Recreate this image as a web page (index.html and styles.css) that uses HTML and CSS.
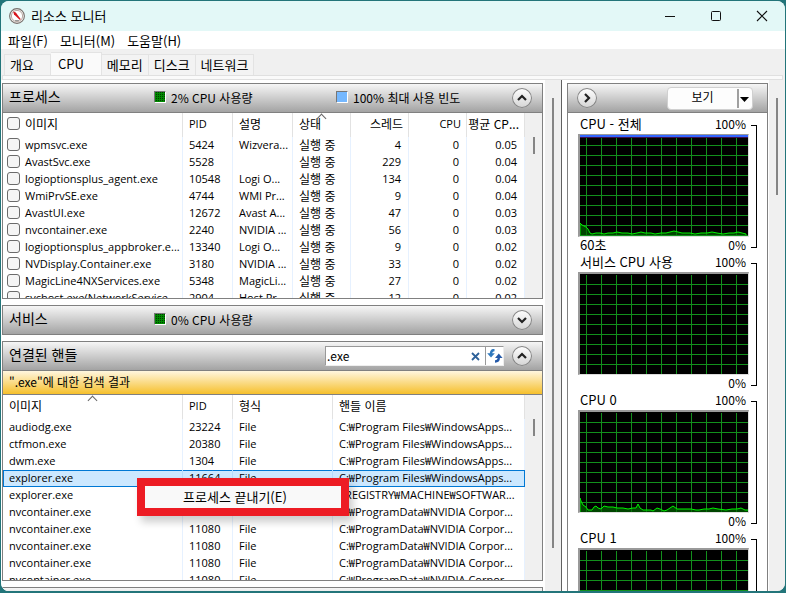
FILE: index.html
```html
<!DOCTYPE html>
<html lang="ko">
<head>
<meta charset="utf-8">
<title>리소스 모니터</title>
<link rel="stylesheet" href="styles.css">
</head>
<body>
<div class="window">
  <header class="titlebar">
    <svg class="app-icon" width="16" height="16" viewBox="0 0 16 16" aria-hidden="true">
      <circle cx="8" cy="8" r="7.4" fill="#f4f1ef" stroke="#77706c" stroke-width="1.1"/>
      <circle cx="8" cy="8" r="5.6" fill="#fff" stroke="#b9aaa4" stroke-width="1"/>
      <path d="M4.200 3.600 6.800 4.400 11.800 11.200 10.600 11.800 5 6.400Z" fill="#d8151c"/>
      <path d="M6 12.5h4" stroke="#999" stroke-width="1"/>
    </svg>
    <h1 class="title">리소스 모니터</h1>
    <div class="controls">
      <button type="button" aria-label="최소화"><svg width="12" height="12" viewBox="0 0 12 12"><path d="M1 6.5h10" stroke="#111"/></svg></button>
      <button type="button" aria-label="최대화"><svg width="12" height="12" viewBox="0 0 12 12"><rect x="1.5" y="1.5" width="9" height="9" rx="1" fill="none" stroke="#111"/></svg></button>
      <button type="button" aria-label="닫기"><svg width="12" height="12" viewBox="0 0 12 12"><path d="M1 1l10 10M11 1 1 11" stroke="#111" stroke-width="1.1"/></svg></button>
    </div>
  </header>
  <nav class="menubar">
    <button type="button">파일(F)</button>
    <button type="button">모니터(M)</button>
    <button type="button">도움말(H)</button>
  </nav>
  <div class="tabs" role="tablist">
    <button type="button" role="tab" class="tab tab-first">개요</button>
    <button type="button" role="tab" class="tab active" aria-selected="true">CPU</button>
    <button type="button" role="tab" class="tab">메모리</button>
    <button type="button" role="tab" class="tab">디스크</button>
    <button type="button" role="tab" class="tab">네트워크</button>
  </div>
  <div class="tab-edge"></div>

  <main class="content">
    <div class="left">
      <section class="panel">
        <div class="panel-head">
          <h2>프로세스</h2>
          <span class="stat stat-usage"><i class="swatch green"></i>2% CPU 사용량</span>
          <span class="stat"><i class="swatch blue"></i>100% 최대 사용 빈도</span>
          <button type="button" class="round" aria-label="접기"><svg width="20" height="20" viewBox="0 0 20 20"><path d="M6 12l4-4 4 4" fill="none" stroke="#222" stroke-width="2.2"/></svg></button>
        </div>
        <div class="view">
          <table class="grid">
            <colgroup><col><col class="w50"><col class="w60"><col class="w58"><col class="w58"><col class="w58"><col class="w58"></colgroup>
            <thead><tr><th><label><input type="checkbox">이미지</label></th><th class="latin">PID</th><th>설명</th><th class="sorted">상태</th><th class="num">스레드</th><th class="num latin">CPU</th><th class="num">평균 CP...</th></tr></thead>
            <tbody>
              <tr><td><label><input type="checkbox">wpmsvc.exe</label></td><td>5424</td><td>Wizvera...</td><td class="ko">실행 중</td><td class="num">4</td><td class="num">0</td><td class="num">0.05</td></tr>
              <tr><td><label><input type="checkbox">AvastSvc.exe</label></td><td>5528</td><td></td><td class="ko">실행 중</td><td class="num">229</td><td class="num">0</td><td class="num">0.04</td></tr>
              <tr><td><label><input type="checkbox">logioptionsplus_agent.exe</label></td><td>10548</td><td>Logi O...</td><td class="ko">실행 중</td><td class="num">134</td><td class="num">0</td><td class="num">0.04</td></tr>
              <tr><td><label><input type="checkbox">WmiPrvSE.exe</label></td><td>4744</td><td>WMI Pr...</td><td class="ko">실행 중</td><td class="num">9</td><td class="num">0</td><td class="num">0.04</td></tr>
              <tr><td><label><input type="checkbox">AvastUI.exe</label></td><td>12672</td><td>Avast A...</td><td class="ko">실행 중</td><td class="num">47</td><td class="num">0</td><td class="num">0.03</td></tr>
              <tr><td><label><input type="checkbox">nvcontainer.exe</label></td><td>2240</td><td>NVIDIA ...</td><td class="ko">실행 중</td><td class="num">56</td><td class="num">0</td><td class="num">0.03</td></tr>
              <tr><td><label><input type="checkbox">logioptionsplus_appbroker.e...</label></td><td>13340</td><td>Logi O...</td><td class="ko">실행 중</td><td class="num">9</td><td class="num">0</td><td class="num">0.02</td></tr>
              <tr><td><label><input type="checkbox">NVDisplay.Container.exe</label></td><td>3180</td><td>NVIDIA ...</td><td class="ko">실행 중</td><td class="num">33</td><td class="num">0</td><td class="num">0.02</td></tr>
              <tr><td><label><input type="checkbox">MagicLine4NXServices.exe</label></td><td>5348</td><td>MagicLi...</td><td class="ko">실행 중</td><td class="num">27</td><td class="num">0</td><td class="num">0.02</td></tr>
              <tr><td><label><input type="checkbox">svchost.exe(NetworkService...</label></td><td>2904</td><td>Host Pr...</td><td class="ko">실행 중</td><td class="num">12</td><td class="num">0</td><td class="num">0.02</td></tr>
            </tbody>
          </table>
          <div class="lane"><div class="thumb"></div></div>
        </div>
      </section>

      <section class="panel">
        <div class="panel-head">
          <h2>서비스</h2>
          <span class="stat stat-usage"><i class="swatch green"></i>0% CPU 사용량</span>
          <button type="button" class="round" aria-label="펼치기"><svg width="20" height="20" viewBox="0 0 20 20"><path d="M6 8l4 4 4-4" fill="none" stroke="#222" stroke-width="2.2"/></svg></button>
        </div>
      </section>

      <section class="panel">
        <div class="panel-head">
          <h2>연결된 핸들</h2>
          <div class="search">
            <input type="text" value=".exe" aria-label="핸들 검색">
            <button type="button" class="clear" aria-label="지우기"><svg width="9" height="9" viewBox="0 0 9 9"><path d="M1 1l7 7M8 1 1 8" stroke="#2d6199" stroke-width="1.8"/></svg></button>
            <button type="button" class="refresh" aria-label="새로 고침"><svg width="16" height="14" viewBox="0 0 16 14"><path d="M7.5 1C5 1 4 2 4 5" fill="none" stroke="#2f78bd" stroke-width="2.4"/><path d="M.2 4.200h7.600L4 8.500Z" fill="#2f78bd"/><path d="M8 12.500c2.600 0 3.800-1 3.800-4" fill="none" stroke="#2459a8" stroke-width="2.4"/><path d="M8 9h7.600L11.800 4.600Z" fill="#2459a8"/></svg></button>
          </div>
          <button type="button" class="round" aria-label="접기"><svg width="20" height="20" viewBox="0 0 20 20"><path d="M6 12l4-4 4 4" fill="none" stroke="#222" stroke-width="2.2"/></svg></button>
        </div>
        <p class="result">".exe"에 대한 검색 결과</p>
        <div class="view">
          <table class="grid">
            <colgroup><col class="w180"><col class="w50"><col class="w100"><col></colgroup>
            <thead><tr><th class="sorted">이미지</th><th class="latin">PID</th><th>형식</th><th>핸들 이름</th></tr></thead>
            <tbody>
              <tr><td>audiodg.exe</td><td>23224</td><td>File</td><td>C:₩Program Files₩WindowsApps...</td></tr>
              <tr><td>ctfmon.exe</td><td>20380</td><td>File</td><td>C:₩Program Files₩WindowsApps...</td></tr>
              <tr><td>dwm.exe</td><td>1304</td><td>File</td><td>C:₩Program Files₩WindowsApps...</td></tr>
              <tr class="selected"><td>explorer.exe</td><td>11664</td><td>File</td><td>C:₩Program Files₩WindowsApps...</td></tr>
              <tr><td>explorer.exe</td><td></td><td></td><td>₩REGISTRY₩MACHINE₩SOFTWAR...</td></tr>
              <tr><td>nvcontainer.exe</td><td></td><td></td><td>C:₩ProgramData₩NVIDIA Corpor...</td></tr>
              <tr><td>nvcontainer.exe</td><td>11080</td><td>File</td><td>C:₩ProgramData₩NVIDIA Corpor...</td></tr>
              <tr><td>nvcontainer.exe</td><td>11080</td><td>File</td><td>C:₩ProgramData₩NVIDIA Corpor...</td></tr>
              <tr><td>nvcontainer.exe</td><td>11080</td><td>File</td><td>C:₩ProgramData₩NVIDIA Corpor...</td></tr>
              <tr><td>nvcontainer.exe</td><td>11080</td><td>File</td><td>C:₩ProgramData₩NVIDIA Corpor...</td></tr>
            </tbody>
          </table>
          <div class="lane"><div class="thumb"></div></div>
          <div class="context-menu" role="menu"><button type="button" role="menuitem">프로세스 끝내기(E)</button></div>
        </div>
      </section>
      <section class="panel"><div class="panel-head"></div></section>
    </div>
    <div class="lane pane-lane"><div class="thumb thumb-left"></div></div>

    <aside class="right">
      <div class="panel charts">
        <div class="panel-head">
          <button type="button" class="round round-first" aria-label="숨기기"><svg width="20" height="20" viewBox="0 0 20 20"><path d="M8 6l4 4-4 4" fill="none" stroke="#222" stroke-width="2.2"/></svg></button>
          <button type="button" class="view-button"><span>보기</span><svg width="13" height="19" viewBox="0 0 13 19"><path d="M1 0v19" stroke="#777" stroke-width="1.4"/><path d="M3 8h9l-4.500 5Z" fill="#000"/></svg></button>
        </div>
        <div class="chart-list">
          <div class="chart">
            <div class="plot">
              <div class="caption"><span>CPU - 전체</span><span class="percent">100%</span></div>
              <div class="frame frame-max"><svg viewBox="0 0 168 100" preserveAspectRatio="none"><path d="M0 0h168v2H0Z" fill="#3366ff"/><path d="M0 2.500h168" stroke="#40104a"/><path class="trace" d="M0 88l2 2 2 1 2 1 2 2 2 4 2 1 4-1 4 0 4 1 4-1h5l4-1 5 1h6l4 1 5-1 4-1 4 1h6l4 1 6-1h5l4-1 4-1 4 1 4 1h8l5 1 6-1h6l5-1 5 1 6 1 6-1h5l4-1 4 1 4 1V101H0Z"/></svg></div>
              <div class="caption"><span>60초</span><span class="percent">0%</span></div>
            </div>
            <div class="bracket"></div>
          </div>
          <div class="chart">
            <div class="plot">
              <div class="caption"><span>서비스 CPU 사용</span><span class="percent">100%</span></div>
              <div class="frame"></div>
              <div class="caption"><span></span><span class="percent">0%</span></div>
            </div>
            <div class="bracket"></div>
          </div>
          <div class="chart">
            <div class="plot">
              <div class="caption"><span>CPU 0</span><span class="percent">100%</span></div>
              <div class="frame"><svg viewBox="0 0 168 100" preserveAspectRatio="none"><path class="trace" d="M0 86l1 3 2 4 3 2 2 3h4l2-3 2-1 2 2 3 1 3-3 4 1h5l4 1h6l5 1 5-1 3 0 2-4 2 4 3 2h8l2 1 4-3 3 1 4 2 3-1 3-2 3-2 4 3h14l5 1h3l5-1h5l4-1 5 1 8 1 6-1h5l4-1 4 2h4V101H0Z"/></svg></div>
              <div class="caption"><span></span><span class="percent">0%</span></div>
            </div>
            <div class="bracket"></div>
          </div>
          <div class="chart">
            <div class="plot">
              <div class="caption"><span>CPU 1</span><span class="percent">100%</span></div>
              <div class="frame"></div>
              <div class="caption"><span></span><span class="percent">0%</span></div>
            </div>
            <div class="bracket"></div>
          </div>
        </div>
      </div>
    </aside>
    <div class="lane pane-lane"><div class="thumb thumb-right"></div></div>
  </main>
</div>
</body>
</html>
```
FILE: styles.css
```css
* { box-sizing: border-box; }
body {
  margin: 0;
  padding: 1px 1px 2px;
  height: 100vh;
  overflow: hidden;
  background: #23757a;
  color: #000;
  font: 12px/17px "Noto Sans CJK KR", sans-serif;
}
h1, h2, p { margin: 0; font-weight: 400; }
button, input { font: inherit; color: inherit; margin: 0; }
button { border: 0; padding: 0; background: none; }
svg { display: block; }

.window {
  display: flex;
  flex-direction: column;
  height: 100%;
  overflow: hidden;
  border-radius: 8px;
  background: #f0f0f0;
}
.titlebar {
  display: flex;
  align-items: center;
  flex: none;
  height: 30px;
  padding-left: 8px;
  background: #e3f8f7;
}
.title { margin-left: 6px; padding-bottom: 2px; font-size: 13px; }
.controls { display: flex; margin-left: auto; }
.controls button { display: grid; place-items: center; width: 46px; height: 30px; }
.menubar {
  display: flex;
  flex: none;
  gap: 12px;
  height: 18px;
  padding-left: 7px;
  background: #fff;
  font-size: 13px;
}
.tabs { display: flex; align-items: flex-end; flex: none; height: 26px; padding-left: 3px; }
.tab {
  height: 21px;
  padding: 0 5px 2px;
  border: 1px solid #e3e3e3;
  border-width: 1px 1px 0 0;
  background: #f3f3f3;
  font-size: 13px;
}
.tab-first { border-left-width: 1px; padding-right: 16px; }
.tab.active { height: 23px; padding: 0 17px 2px 7px; background: #fafafa; }
.tab-edge { flex: none; height: 5px; margin: 0 2px 0 1px; border: 1px solid #e0e0e0; background: #fafafa; }

.content { display: flex; flex: 1; min-height: 0; }
.left {
  display: flex;
  flex: 1;
  flex-direction: column;
  gap: 6px;
  min-width: 0;
  padding: 3px 2px 0 1px;
  overflow: hidden;
  background: #fff;
}
.panel { flex: none; border: 1px solid #808080; }
.panel-head {
  display: flex;
  align-items: center;
  height: 28px;
  padding: 0 10px 0 6px;
  background: linear-gradient(#f6f6f6, #a3a3a3);
}
.panel-head h2 { width: 145px; padding-bottom: 3px; font-size: 14px; }
.stat { display: flex; align-items: center; gap: 5px; padding-bottom: 2px; }
.stat-usage { width: 182px; }
.swatch { width: 12px; height: 12px; border: 1px solid; border-color: #777 #fff #fff #777; }
.green {
  background:
    repeating-linear-gradient(90deg, #008a00 0 1px, transparent 1px 2px),
    repeating-linear-gradient(#003c00 0 1px, #008a00 1px 2px);
}
.blue { background: #75b8ff; }
.round {
  flex: none;
  width: 20px;
  height: 20px;
  margin-left: auto;
  border-radius: 50%;
  background: linear-gradient(#fff, #d4d4d4);
  box-shadow: inset 0 0 0 1px #858585;
}
.round-first { margin-left: 3px; }

.view { position: relative; display: flex; height: 186px; overflow: hidden; border-top: 1px solid #808080; background: #fff; }
.grid {
  flex: 1;
  align-self: flex-start;
  width: 100%;
  min-width: 0;
  table-layout: fixed;
  border-collapse: separate;
  border-spacing: 0;
}
.w50 { width: 50px; }
.w58 { width: 58px; }
.w60 { width: 60px; }
.w100 { width: 100px; }
.w180 { width: 180px; }
.grid th, .grid td {
  height: 17px;
  padding: 0 0 0 6px;
  overflow: hidden;
  border-right: 1px solid #e6f1ff;
  font-weight: 400;
  text-align: left;
  white-space: nowrap;
}
.grid td {
  padding-bottom: 2px;
  font-family: "Open Sans", "Noto Sans CJK KR", sans-serif;
  font-size: 11px;
  line-height: 15px;
}
.grid .latin { font-family: "Open Sans", sans-serif; font-size: 11px; }
.grid td.ko { font-family: "Noto Sans CJK KR", sans-serif; font-size: 12px; }
.grid th { position: relative; height: 24px; padding-bottom: 3px; border-color: #e2e2e2; }
.grid .num { padding-right: 7px; padding-left: 0; text-align: right; }
.grid th.num { padding-right: 5px; }
.sorted::before {
  content: "";
  position: absolute;
  top: 2px;
  left: calc(50% - 4px);
  width: 6px;
  height: 6px;
  border: 1px solid #666;
  border-width: 1px 0 0 1px;
  transform: rotate(45deg);
}
.grid label { display: flex; align-items: center; gap: 5px; height: 15px; margin-left: -2px; }
.grid input {
  appearance: none;
  flex: none;
  width: 13px;
  height: 13px;
  border: 1px solid #6b6b6b;
  border-radius: 3px;
  background: #f5f5f5;
}
.selected td { border-right-color: #b5dcfc; background: #cce8ff; box-shadow: inset 0 1px #0078d4, inset 0 -1px #0078d4; }
.selected td:first-child { box-shadow: inset 0 1px #0078d4, inset 0 -1px #0078d4, inset 1px 0 #0078d4; }
.selected td:last-child { border-right-color: #0078d4; }
.lane { display: flex; flex: none; justify-content: center; width: 17px; background: #f0f0f0; }
.thumb { width: 2px; height: 17px; margin-top: 24px; background: #858585; }
.pane-lane { width: 16px; }
.pane-lane .thumb { margin-top: 18px; }
.pane-lane .thumb-left { height: 450px; }
.pane-lane .thumb-right { height: 97px; }

.search {
  display: flex;
  align-items: center;
  width: 179px;
  height: 20px;
  margin-left: auto;
  border: 1px solid;
  border-color: #999 #eee #eee #999;
  background: #fff;
}
.search + .round { margin-left: 8px; }
.search input { flex: 1; min-width: 0; height: 18px; padding: 0 1px 2px; border: 0; outline: 0; background: none; font-size: 12px; }
.clear { padding: 0 5px; }
.refresh { height: 18px; padding-left: 1px; border-left: 1px solid #999; }
.result {
  height: 24px;
  padding-left: 6px;
  border-top: 1px solid #808080;
  background: linear-gradient(#fff6df, #f6c02c);
  font-size: 12px;
  line-height: 21px;
}
.context-menu {
  position: absolute;
  top: 83px;
  left: 134px;
  width: 212px;
  height: 38px;
  border: 8px solid #ed1c24;
  background: #f9f9f9;
  box-shadow: 4px 6px 8px #0003;
}
.context-menu button { width: 100%; height: 22px; padding: 0 0 2px 38px; text-align: left; font-size: 13px; }

.right { flex: none; width: 208px; padding: 3px 1px 0 5px; overflow: hidden; border-left: 1px solid #606060; background: #fff; }
.view-button {
  display: flex;
  align-items: center;
  width: 86px;
  height: 23px;
  margin-left: auto;
  padding-right: 2px;
  border: 1px solid #d0d0d0;
  border-radius: 4px;
  background: #fdfdfd;
}
.view-button span { flex: 1; padding: 0 0 3px; }
.charts .panel-head { padding-right: 14px; }
.chart-list { padding: 3px 10px 0; border-top: 1px solid #808080; background: #fff; }
.chart { display: flex; gap: 2px; height: 138px; }
.plot { flex: 1; }
.caption { display: flex; justify-content: space-between; height: 18px; padding: 0 3px 0 2px; font-size: 13px; line-height: 16px; }
.percent { font-size: 12px; }
.frame {
  height: 103px;
  border: 2px solid #999;
  border-width: 2px 1px 1px 2px;
  border-right-color: #ddd;
  border-bottom-color: #ddd;
  background:
    linear-gradient(#000, #000) 0 0 / 100% 1px no-repeat,
    linear-gradient(90deg, #12901c 1px, transparent 1px) 6px 0 / 15px 10px,
    linear-gradient(#12901c 1px, transparent 1px) 0 0 / 15px 10px,
    #000;
}
.frame-max { border-top-width: 1px; }
.frame svg { width: 100%; height: 100px; }
.trace { fill: #006400b0; stroke: #00f000; stroke-width: 1; }
.bracket { width: 6px; height: 123px; margin-top: 9px; border: 1px solid #000; border-left: 0; }
```
